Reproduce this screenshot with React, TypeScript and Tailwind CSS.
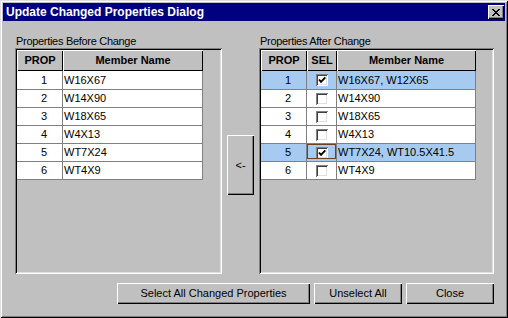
import React from "react";

type Row = { prop: number; name: string; sel?: boolean; focus?: boolean };

const before: Row[] = [
  { prop: 1, name: "W16X67" },
  { prop: 2, name: "W14X90" },
  { prop: 3, name: "W18X65" },
  { prop: 4, name: "W4X13" },
  { prop: 5, name: "WT7X24" },
  { prop: 6, name: "WT4X9" },
];

const after: Row[] = [
  { prop: 1, name: "W16X67, W12X65", sel: true },
  { prop: 2, name: "W14X90" },
  { prop: 3, name: "W18X65" },
  { prop: 4, name: "W4X13" },
  { prop: 5, name: "WT7X24, WT10.5X41.5", sel: true, focus: true },
  { prop: 6, name: "WT4X9" },
];

const raised =
  "shadow-[inset_1px_1px_0_#fff,inset_-1px_-1px_0_#000,inset_-2px_-2px_0_#808080]";
const sunken =
  "shadow-[inset_1px_1px_0_#808080,inset_-1px_-1px_0_#fff,inset_2px_2px_0_#000,inset_-2px_-2px_0_#dfdfdf]";
const headerCell =
  "h-[21px] flex items-center justify-center font-bold shadow-[inset_1px_1px_0_#fff,inset_-1px_-1px_0_#000]";

function CloseGlyph() {
  const cells: [number, number, number][] = [
    [0, 0, 2], [6, 0, 2],
    [1, 1, 2], [5, 1, 2],
    [2, 2, 4],
    [3, 3, 2],
    [2, 4, 4],
    [1, 5, 2], [5, 5, 2],
    [0, 6, 2], [6, 6, 2],
  ];
  return (
    <svg width="8" height="7" viewBox="0 0 8 7" shapeRendering="crispEdges">
      {cells.map(([x, y, w], i) => (
        <rect key={i} x={x} y={y} width={w} height={1} fill="#000" />
      ))}
    </svg>
  );
}

function Checkbox({ checked }: { checked?: boolean }) {
  return (
    <div className="w-[12px] h-[12px] bg-white shadow-[inset_1px_1px_0_#808080,inset_-1px_-1px_0_#fff,inset_2px_2px_0_#404040,inset_-2px_-2px_0_#dfdfdf]">
      {checked && (
        <svg width="12" height="12" viewBox="0 0 12 12">
          <polyline points="3,5.5 5,7.8 9.3,3.3" fill="none" stroke="#000" strokeWidth="1.9" />
        </svg>
      )}
    </div>
  );
}

function BeforeTable() {
  return (
    <div className="w-fit">
      <div className="flex">
        <div className={`w-[46px] ${headerCell}`}>PROP</div>
        <div className={`w-[140px] ${headerCell}`}>Member Name</div>
      </div>
      {before.map((r, i) => (
        <div key={r.prop} className={`flex bg-white ${i === 0 ? "h-[19px]" : "h-[18px]"}`}>
          <div className="w-[46px] pl-[9px] flex items-center justify-center border-r border-b border-[#808080]">
            {r.prop}
          </div>
          <div className="w-[140px] pl-[1px] flex items-center border-r border-b border-[#808080]">
            {r.name}
          </div>
        </div>
      ))}
    </div>
  );
}

function AfterTable() {
  return (
    <div className="w-fit">
      <div className="flex">
        <div className={`w-[46px] ${headerCell}`}>PROP</div>
        <div className={`w-[30px] ${headerCell}`}>SEL</div>
        <div className={`w-[139px] ${headerCell}`}>Member Name</div>
      </div>
      {after.map((r, i) => (
        <div
          key={r.prop}
          className={`flex ${r.sel ? "bg-[#a6caf0]" : "bg-white"} ${i === 0 ? "h-[19px]" : "h-[18px]"}`}
        >
          <div className="w-[46px] pl-[9px] flex items-center justify-center border-r border-b border-[#808080]">
            {r.prop}
          </div>
          <div className="relative w-[30px] flex items-center justify-center border-r border-b border-[#808080]">
            <Checkbox checked={r.sel} />
            {r.focus && (
              <div className="absolute left-0 top-0 right-0 bottom-[2px] border border-[#6b4226]" />
            )}
          </div>
          <div className="w-[139px] pl-[1px] flex items-center border-r border-b border-[#808080]">
            {r.name}
          </div>
        </div>
      ))}
    </div>
  );
}

export default function App() {
  return (
    <div
      className="w-[508px] h-[318px] bg-[#c0c0c0] p-[3px] flex flex-col text-[11px] text-black shadow-[inset_1px_1px_0_#dfdfdf,inset_-1px_-1px_0_#000,inset_2px_2px_0_#fff,inset_-2px_-2px_0_#808080]"
      style={{ fontFamily: '"Liberation Sans", Arial, sans-serif' }}
    >
      <div className="h-[18px] bg-[#000080] flex items-center justify-between pl-[3px] pr-[1px]">
        <span className="text-white font-bold text-[12px] leading-[18px]">
          Update Changed Properties Dialog
        </span>
        <div className={`w-[16px] h-[14px] bg-[#c0c0c0] flex items-center justify-center ${raised}`}>
          <CloseGlyph />
        </div>
      </div>

      <div className="flex pl-[12px] pt-[14px]">
        <div className="w-[207px] flex flex-col">
          <div className="h-[13px] leading-[13px] pl-[1px] tracking-[-0.3px]">Properties Before Change</div>
          <div className={`h-[226px] p-[2px] ${sunken}`}>
            <BeforeTable />
          </div>
        </div>

        <div className="ml-[5px] w-[27px] pt-[100px]">
          <div className={`h-[60px] flex items-center justify-center ${raised}`}>&lt;-</div>
        </div>

        <div className="ml-[5px] w-[235px] flex flex-col">
          <div className="h-[13px] leading-[13px] pl-[1px] tracking-[-0.3px]">Properties After Change</div>
          <div className={`h-[226px] p-[2px] ${sunken}`}>
            <AfterTable />
          </div>
        </div>
      </div>

      <div className="flex justify-end gap-[4px] mt-[9px] pr-[11px]">
        <div className={`w-[193px] h-[21px] flex items-center justify-center ${raised}`}>
          Select All Changed Properties
        </div>
        <div className={`w-[88px] h-[21px] flex items-center justify-center ${raised}`}>
          Unselect All
        </div>
        <div className={`w-[88px] h-[21px] flex items-center justify-center ${raised}`}>
          Close
        </div>
      </div>
    </div>
  );
}
